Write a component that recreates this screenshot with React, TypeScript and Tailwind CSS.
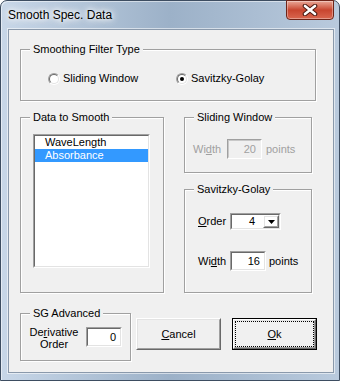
import React from 'react';
import clsx from 'clsx';

function GroupBox({
  title,
  className,
  children,
}: {
  title: string;
  className?: string;
  children?: React.ReactNode;
}) {
  return (
    <div
      className={clsx(
        'relative border border-[#a0a0a0] shadow-[inset_1px_1px_0_#fff,1px_1px_0_#fff]',
        className
      )}
    >
      <span className="absolute left-[9px] top-[-7px] bg-[#f0f0f0] px-[3px] leading-[13px] whitespace-nowrap">
        {title}
      </span>
      {children}
    </div>
  );
}

function Sunken({
  className,
  innerClassName,
  children,
}: {
  className?: string;
  innerClassName?: string;
  children?: React.ReactNode;
}) {
  return (
    <div className={clsx('border border-t-[#a0a0a0] border-l-[#a0a0a0] border-b-white border-r-white', className)}>
      <div
        className={clsx(
          'h-full w-full border border-t-[#696969] border-l-[#696969] border-b-[#e3e3e3] border-r-[#e3e3e3]',
          innerClassName
        )}
      >
        {children}
      </div>
    </div>
  );
}

function Raised({ className, children }: { className?: string; children?: React.ReactNode }) {
  return (
    <div className={clsx('border border-t-white border-l-white border-b-[#696969] border-r-[#696969]', className)}>
      <div className="h-full w-full border border-t-[#e3e3e3] border-l-[#e3e3e3] border-b-[#a0a0a0] border-r-[#a0a0a0]">
        {children}
      </div>
    </div>
  );
}

function Radio({ label, checked, className }: { label: string; checked?: boolean; className?: string }) {
  return (
    <div className={clsx('flex items-center gap-[3px] h-[13px]', className)}>
      <div className="w-[12px] h-[12px] rounded-full border border-t-[#a0a0a0] border-l-[#a0a0a0] border-b-white border-r-white">
        <div className="w-full h-full rounded-full border border-t-[#696969] border-l-[#696969] border-b-[#e3e3e3] border-r-[#e3e3e3] bg-white flex items-center justify-center">
          {checked && <div className="w-[4px] h-[4px] rounded-full bg-black" />}
        </div>
      </div>
      <span className="leading-[13px]">{label}</span>
    </div>
  );
}

const U = ({ children }: { children: React.ReactNode }) => (
  <span className="underline underline-offset-1">{children}</span>
);

export default function App() {
  return (
    <div className="w-[340px] h-[381px] font-['Liberation_Sans',Arial,sans-serif] text-[11px] text-black">
      <div className="w-[340px] h-[381px] flex flex-col rounded-t-[7px] border border-[#3d4d61] bg-gradient-to-r from-[#c8d7e8] via-[#9cb1c8] to-[#b9cadd] shadow-[inset_1px_1px_0_rgba(255,255,255,0.5)]">
        {/* Title bar */}
        <div className="h-[28px] flex items-start justify-between pl-[7px] pr-[5px]">
          <span className="mt-[6px] text-[12px] leading-[16px] text-black [text-shadow:0_0_8px_#fff,0_0_8px_#fff,0_0_4px_#fff]">
            Smooth Spec. Data
          </span>
          <div className="-mt-[1px] w-[48px] h-[20px] rounded-b-[4px] border border-[#6e2418] bg-gradient-to-b from-[#e9a797] via-[#c8452f] to-[#d9664f] shadow-[inset_0_0_0_1px_rgba(255,255,255,0.35)] flex items-center justify-center">
            <svg width="16" height="12" viewBox="0 0 16 12">
              <path d="M3 2 L13 10 M13 2 L3 10" stroke="#4a1810" strokeWidth="4.6" strokeLinecap="round" fill="none" />
              <path d="M3 2 L13 10 M13 2 L3 10" stroke="#fff" strokeWidth="2.6" strokeLinecap="round" fill="none" />
            </svg>
          </div>
        </div>

        {/* Client area */}
        <div className="ml-[7px] w-[326px] h-[344px] border border-[#8a99ab] bg-[#f0f0f0] shadow-[0_0_0_1px_rgba(255,255,255,0.55)] pl-[11px] pt-[19px]">
          <GroupBox title="Smoothing Filter Type" className="w-[296px] h-[52px]">
            <div className="flex pt-[22px] pl-[27px]">
              <Radio label="Sliding Window" className="w-[128px]" />
              <Radio label="Savitzky-Golay" checked />
            </div>
          </GroupBox>

          <div className="flex mt-[16px] gap-[20px]">
            <GroupBox title="Data to Smooth" className="w-[144px] h-[176px]">
              <Sunken className="ml-[12px] mt-[16px] w-[117px] h-[134px]" innerClassName="bg-white">
                <div className="h-[13px] leading-[13px] pl-[10px]">WaveLength</div>
                <div className="h-[13px] leading-[13px] pl-[10px] bg-[#3399ff] text-white">Absorbance</div>
              </Sunken>
            </GroupBox>

            <div className="flex flex-col gap-[16px]">
              <GroupBox title="Sliding Window" className="w-[128px] h-[56px]">
                <div className="flex items-center mt-[21px] pl-[8px] text-[#a0a0a0]">
                  <span className="w-[34px] leading-[13px]">
                    Wi<U>d</U>th
                  </span>
                  <Sunken
                    className="w-[35px] h-[20px] border-b-[#f0f0f0] border-r-[#f0f0f0]"
                    innerClassName="bg-[#f0f0f0] border-t-[#c8c8c8] border-l-[#c8c8c8] border-b-[#f0f0f0] border-r-[#f0f0f0] flex items-center justify-end pr-[4px]"
                  >
                    20
                  </Sunken>
                  <span className="ml-[4px] leading-[13px]">points</span>
                </div>
              </GroupBox>

              <GroupBox title="Savitzky-Golay" className="w-[128px] h-[104px]">
                <div className="flex items-center mt-[23px] pl-[13px]">
                  <span className="w-[32px] leading-[13px]">
                    <U>O</U>rder
                  </span>
                  <Sunken className="w-[51px] h-[17px]" innerClassName="bg-white flex">
                    <div className="flex-1 flex items-center justify-end pr-[8px] leading-[13px]">4</div>
                    <Raised className="w-[16px] h-full">
                      <div className="w-full h-full flex items-center justify-center">
                        <svg width="7" height="4" viewBox="0 0 7 4">
                          <path d="M0 0 H7 L3.5 4 Z" fill="#000" />
                        </svg>
                      </div>
                    </Raised>
                  </Sunken>
                </div>
                <div className="flex items-center mt-[21px] pl-[13px]">
                  <span className="w-[32px] leading-[13px]">
                    Wi<U>d</U>th
                  </span>
                  <Sunken className="w-[36px] h-[20px]" innerClassName="bg-white flex items-center justify-end pr-[4px]">
                    16
                  </Sunken>
                  <span className="ml-[3px] leading-[13px]">points</span>
                </div>
              </GroupBox>
            </div>
          </div>

          <div className="flex items-start mt-[20px]">
            <GroupBox title="SG Advanced" className="w-[111px] h-[48px]">
              <div className="flex items-start mt-[12px] pl-[3px]">
                <div className="w-[60px] text-center leading-[12px]">
                  De<U>r</U>ivative
                  <br />
                  Order
                </div>
                <Sunken className="ml-[2px] mt-[1px] w-[36px] h-[20px]" innerClassName="bg-white flex items-center justify-end pr-[4px]">
                  0
                </Sunken>
              </div>
            </GroupBox>

            <Raised className="ml-[5px] mt-[5px] w-[85px] h-[32px]">
              <div className="w-full h-full flex items-center justify-center">
                <U>C</U>ancel
              </div>
            </Raised>

            <div className="ml-[11px] mt-[5px] w-[85px] h-[32px] border border-black">
              <Raised className="w-full h-full">
                <div className="w-full h-full border border-dotted border-black flex items-center justify-center">
                  <U>O</U>k
                </div>
              </Raised>
            </div>
          </div>
        </div>
      </div>
    </div>
  );
}
